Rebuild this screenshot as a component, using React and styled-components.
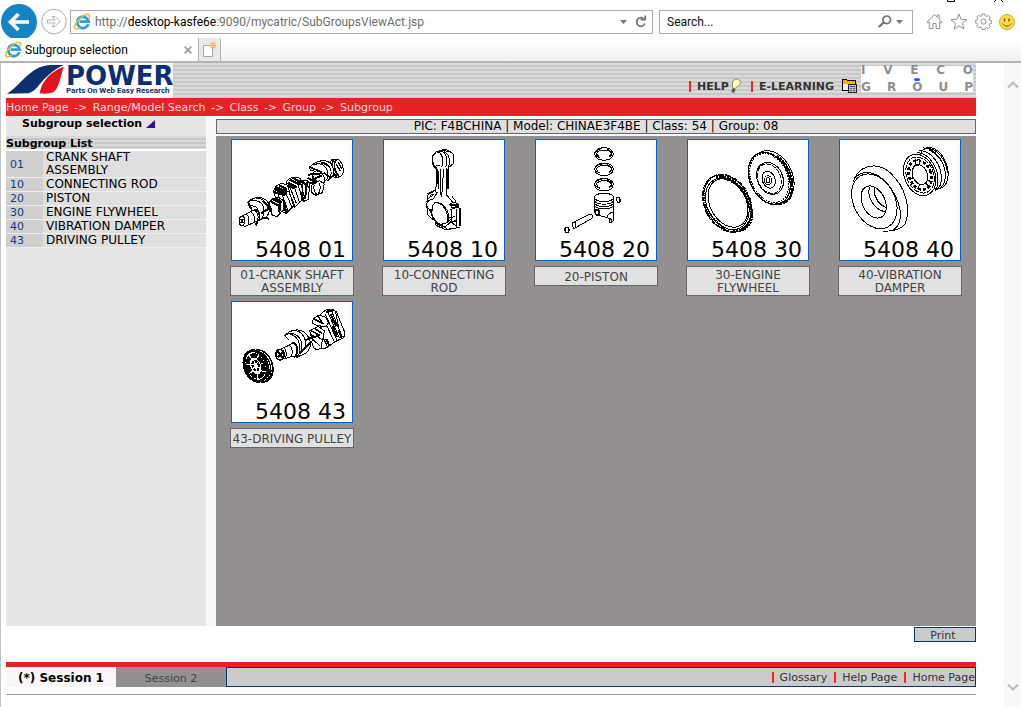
import React from "react";
import styled, { createGlobalStyle, css } from "styled-components";

const GlobalStyle = createGlobalStyle`
  *, *::before, *::after { box-sizing: border-box; }
  body {
    margin: 0;
    background: #fff;
    color: #000;
    font: 11px/13px "DejaVu Sans", Verdana, sans-serif;
  }
  a { color: inherit; text-decoration: none; }
  button, input { font: inherit; color: inherit; }
  svg { display: block; flex: none; }
`;

const hStripes = css`
  background: repeating-linear-gradient(#d9d9d9 0 2px, #c8c8c8 2px 4px);
`;

/* ---------- browser chrome ---------- */

const Window = styled.div`
  display: flex;
  flex-direction: column;
  min-height: 100vh;
`;

const TitleStrip = styled.div`
  display: flex;
  justify-content: flex-end;
  gap: 38px;
  height: 3px;
  padding-right: 17px;
`;

const Toolbar = styled.header`
  display: flex;
  align-items: center;
  height: 35px;
  padding: 2px 6px 0 1px;
  font: 12px/16px Roboto, "Segoe UI", sans-serif;
`;

const IconButton = styled.button`
  display: flex;
  padding: 0;
  border: 0;
  background: none;
`;

const Field = styled.label`
  display: flex;
  align-items: center;
  gap: 4px;
  height: 24px;
  border: 1px solid #a9a9a9;
  background: #fff;
`;

const AddressField = styled(Field)`
  flex: 1;
  margin: 0 6px 0 3px;
  padding: 0 5px 0 3px;
`;

const AddressText = styled.div`
  flex: 1;
  color: #6d6d6d;
  white-space: nowrap;
  b { font-weight: 400; color: #000; }
`;

const SearchField = styled(Field)`
  width: 254px;
  padding: 0 9px 0 7px;
`;

const SearchInput = styled.input`
  flex: 1;
  min-width: 0;
  padding: 0;
  border: 0;
  outline: 0;
  background: none;
  &::placeholder { color: #111; opacity: 1; }
`;

const ToolIcons = styled.div`
  display: flex;
  align-items: center;
  gap: 7px;
  margin-left: 13px;
`;

const TabStrip = styled.div`
  position: relative;
  display: flex;
  height: 25px;
  border-bottom: 2px solid #b4b4b4;
  background: linear-gradient(#fff, #f0f0f0);
  font: 12px/16px Roboto, "Segoe UI", sans-serif;
`;

const BrowserTab = styled.div`
  display: flex;
  align-items: center;
  gap: 3px;
  width: 199px;
  padding: 0 6px 0 5px;
  border-right: 1px solid #b4b4b4;
  background: #fff;
  span { flex: 1; }
`;

const NewTab = styled(IconButton)`
  align-items: center;
  justify-content: center;
  width: 22px;
  border: solid #b4b4b4;
  border-width: 0 1px 0 0;
  background: #e9e9e9;
`;

const Viewport = styled.div`
  display: flex;
  flex: 1;
  border-left: 1px solid #c4c4c4;
`;

const ScrollBar = styled.div`
  display: flex;
  flex-direction: column;
  align-items: center;
  justify-content: space-between;
  width: 17px;
  padding: 17px 0 15px;
  background: #f8f8f8;
`;

/* ---------- page ---------- */

const Page = styled.div`
  display: flex;
  flex-direction: column;
  flex: 1;
  padding: 0 28px 12px 5px;
`;

const Banner = styled.div`
  display: flex;
  justify-content: space-between;
  height: 35px;
  ${hStripes}
`;

const PowerLogo = styled.div`
  display: flex;
  width: 167px;
  background: #fff;
`;

const PowerWords = styled.div`
  display: flex;
  flex-direction: column;
  padding-top: 3px;
  color: #0c2f6e;
  white-space: nowrap;
  strong { font: 700 26px/20px "DejaVu Sans", sans-serif; }
  small { font: 700 8px/10px Roboto, Arial, sans-serif; }
`;

const BannerLinks = styled.nav`
  display: flex;
  align-items: flex-end;
  padding-bottom: 4px;
`;

const BannerLink = styled.a`
  display: flex;
  align-items: center;
  gap: ${(p) => p.$iconGap}px;
  height: 16px;
  margin-right: ${(p) => p.$gap}px;
  color: #333;
  font-weight: 700;
`;

const BarLabel = styled.span`
  display: flex;
  align-items: center;
`;

const Bar = styled.i`
  width: 2px;
  height: 11px;
  margin-right: 6px;
  background: #f22;
`;

const GroupLogo = styled.div`
  display: grid;
  grid-template-rows: 9px 8px 9px;
  width: 112px;
  margin: 3px 3px 0 4px;
  background: #fff;
  color: #8f8f8f;
  align-self: flex-start;
`;

const LogoRow = styled.div`
  display: flex;
  justify-content: space-between;
  font: 700 12px/9px "DejaVu Sans", sans-serif;
`;

const LogoDot = styled.i`
  width: 6px;
  height: 3px;
  border-radius: 50%;
  background: #2452ff;
  place-self: center;
`;

const Breadcrumb = styled.nav`
  display: flex;
  height: 18px;
  background: #e62226;
  color: #fbdada;
  line-height: 20px;
`;

const Arrow = styled.span`
  width: 24px;
  text-align: center;
`;

const Body = styled.div`
  display: flex;
  flex: 1;
  gap: 10px;
  background: #f8f8f8;
`;

const Sidebar = styled.aside`
  width: 200px;
  background: repeating-linear-gradient(90deg, #e7e7e7 0 2px, #e3e3e3 2px 3px);
`;

const SideTitle = styled.h1`
  display: flex;
  align-items: center;
  gap: 4px;
  height: 20px;
  margin: 0;
  padding: 0 0 5px 16px;
  font-size: 11px;
`;

const SideHeading = styled.h2`
  height: 15px;
  margin: 0;
  border-bottom: 2px solid #fff;
  font-size: 11px;
  line-height: 15px;
  ${hStripes}
`;

const GroupTable = styled.table`
  width: 100%;
  border-collapse: collapse;
  font-size: 12px;
  td {
    height: 14px;
    padding: 0 24px 0 3px;
    border-bottom: 1px solid #ededed;
    background: #dfdfdf;
  }
  td:first-child {
    width: 37px;
    padding: 0 0 0 4px;
    background: #cfcfcf;
    color: #0f3e7c;
    font-size: 11px;
  }
`;

const Main = styled.main`
  display: flex;
  flex-direction: column;
  flex: 1;
  padding-top: 3px;
`;

const InfoBar = styled.div`
  height: 15px;
  margin-bottom: 2px;
  border: 1px solid #666;
  background: #e0e0e0;
  font-size: 12px;
  text-align: center;
`;

const Gallery = styled.div`
  display: grid;
  grid-template-columns: repeat(auto-fill, 152px);
  align-content: start;
  row-gap: 5px;
  flex: 1;
  padding-top: 3px;
  background: #929091;
`;

const Card = styled.a`
  display: flex;
  flex-direction: column;
  align-items: center;
  gap: 5px;
`;

const Thumb = styled.div`
  border: 1px solid #0a62cc;
  background: #fff;
`;

const Caption = styled.div`
  display: flex;
  align-items: center;
  justify-content: center;
  width: 124px;
  min-height: 20px;
  padding: 2px 0 0;
  border: 1px solid #666;
  background: #e1e1e1;
  color: #444;
  font-size: 12px;
  text-align: center;
`;

const PrintRow = styled.div`
  display: flex;
  justify-content: flex-end;
  padding: 1px 0 20px;
`;

const PrintButton = styled.button`
  width: 62px;
  height: 15px;
  padding: 1px 4px 0 0;
  border: 1px solid #0b3566;
  background: #cbcbcb;
  color: #333;
`;

const Footer = styled.footer`
  display: flex;
  height: 25px;
  border-top: 5px solid #e62226;
`;

const SessionTab = styled.button`
  width: 110px;
  padding: 2px 0 0;
  border: 0;
  background: ${(p) => (p.$active ? "#f8f8f8" : "#929091")};
  color: ${(p) => (p.$active ? "#000" : "#444")};
  font-size: ${(p) => (p.$active ? 12 : 11)}px;
  font-weight: ${(p) => (p.$active ? 700 : 400)};
`;

const FooterNav = styled.nav`
  display: flex;
  align-items: center;
  justify-content: flex-end;
  gap: 7px;
  flex: 1;
  padding-top: 1px;
  border: 1px solid #0b3566;
  background: #cbcbcb;
  color: #333;
  a { display: flex; align-items: center; }
`;

const Rule = styled.hr`
  width: 100%;
  margin: 7px 0 0;
  border: 0;
  border-top: 1px solid #a0a0a0;
`;

/* ---------- icons ---------- */

const IeIcon = () => (
  <svg width="17" height="17" viewBox="0 0 17 17" fill="none">
    <path d="M14.4 11.2A5.7 5.7 0 1 1 14.6 8.7H5.6" stroke="#2b9fe0" strokeWidth="2.8" />
    <path d="M1.2 15.6C-.6 12.400 3.800 6.600 8.300 3.500S16 .6 15.400 3.800c-.1.900-.5 1.600-.9 2.300" stroke="#f3b82c" strokeWidth="1.500" />
    <path d="M1.200 15.600c1.200 1 3.600-.1 5.200-1.200" stroke="#f3b82c" strokeWidth="1.400" />
  </svg>
);

const BackIcon = () => (
  <svg width="36" height="35" viewBox="0 0 36 35">
    <circle cx="18" cy="18" r="18" fill="#1683c5" />
    <path d="M28 18H10M17.500 10l-8 8 8 8" fill="none" stroke="#fff" strokeWidth="3.600" />
  </svg>
);

const ForwardIcon = () => (
  <svg width="30" height="30" viewBox="0 0 30 30" fill="none" stroke="#adadad">
    <circle cx="17" cy="14.500" r="12.300" />
    <path d="M10.500 13h7.500l-3-3.500h3l5 5-5 5h-3l3-3.500h-7.500z" />
  </svg>
);

const Caret = () => (
  <svg width="7" height="4" viewBox="0 0 7 4"><path d="M0 0h7L3.500 4z" fill="#777" /></svg>
);

const ReloadIcon = () => (
  <svg width="12" height="14" viewBox="0 0 12 14" fill="none" stroke="#6f6f6f" strokeWidth="1.700">
    <path d="M8.500 3.500A4.300 4.300 0 1 0 10 8.500" />
    <path d="M5.500 4.600h4.700V.5" />
  </svg>
);

const SearchIcon = () => (
  <svg width="14" height="13" viewBox="0 0 14 13" fill="none" stroke="#6f6f6f">
    <circle cx="8.700" cy="4.800" r="3.800" strokeWidth="1.700" />
    <path d="M5.800 7.500.800 12" strokeWidth="2.200" />
  </svg>
);

const HomeIcon = () => (
  <svg width="17" height="17" viewBox="0 0 17 17" fill="none" stroke="#929292">
    <path d="M1 9.200 8.500 1.500l2.700 2.800V2h2v4.300L16 9.200l-1 1-1.300-1.300v6.600h-3.600V10.500H7v5H3.300V8.900L2 10.200z" />
  </svg>
);

const StarIcon = () => (
  <svg width="18" height="17" viewBox="0 0 18 17" fill="none" stroke="#929292">
    <path d="m9 1 2.100 5.400 5.900.3-4.600 3.700 1.500 5.600L9 12.900 4.100 16l1.500-5.600L1 6.700l5.900-.3z" />
  </svg>
);

const GearIcon = () => (
  <svg width="17" height="17" viewBox="0 0 17 17" fill="none" stroke="#929292">
    <circle cx="8.500" cy="8.500" r="2.600" />
    <path d="M7 1h3l.3 2 1.300.6 1.700-1.200 2 2-1.100 1.700.5 1.300 2 .3v2.600l-2 .4-.6 1.300 1.200 1.700-2 2-1.700-1.200-1.300.6L10 16.500H7l-.4-2-1.300-.6-1.700 1.200-2-2L2.800 11.400l-.6-1.200-1.900-.4V7.500l2-.4.500-1.300L1.700 4.200l2-2 1.700 1.200L6.700 3z" />
  </svg>
);

const SmileIcon = () => (
  <svg width="16" height="16" viewBox="0 0 16 16">
    <circle cx="8" cy="8" r="7.500" fill="#ffdc3e" stroke="#cfa92c" />
    <path d="M5.500 4.500v3M10 4.500v3" stroke="#735c12" strokeWidth="1.500" />
    <path d="M3.800 9.500c1.500 3.500 6.900 3.500 8.400 0" fill="none" stroke="#735c12" />
  </svg>
);

const CloseIcon = () => (
  <svg width="8" height="8" viewBox="0 0 8 8"><path d="m.7.700 6.600 6.600m0-6.600L.7 7.300" stroke="#a0a0a0" strokeWidth="1.800" /></svg>
);

const NewTabIcon = () => (
  <svg width="15" height="16" viewBox="0 0 15 16">
    <path d="M1.500 3.500h9v11h-9z" fill="#fff" stroke="#a9a9a9" />
    <path d="M11 0v7M7.500 3.500h7M8.500 1l5 5m0-5-5 5" stroke="#e9a227" />
    <circle cx="11" cy="3.500" r="1.600" fill="#f7c95c" />
  </svg>
);

const Chevron = ({ down }) => (
  <svg width="12" height="9" viewBox="0 0 12 9">
    <path d={down ? "M1 1.500l5 5 5-5" : "M1 7.500l5-5 5 5"} fill="none" stroke="#bcbcbc" strokeWidth="2.200" />
  </svg>
);

const PowerMark = () => (
  <svg width="60" height="35" viewBox="0 0 180 105">
    <path d="M3 92C44 68 72 9 132 6h42C142 18 114 48 101 64 90 78 82 86 68 91z" fill="#0c2f6e" />
    <path d="M173 11c-10 30-12 55-26 72-9 10-32 10-46 8 5-35 32-65 72-80z" fill="#e2121f" />
  </svg>
);

const BulbIcon = () => (
  <svg width="12" height="16" viewBox="0 0 12 16">
    <path d="M2.500 7.500 2.500 5C3 1.500 6 .5 8.500 1.500c2.500 1.200 2.500 4.500.3 6L6.500 9 5.500 11l-3-1z" fill="#fffab0" stroke="#8b8b62" />
    <path d="m2.500 10 3 1.500L4 15l-2.500-1z" fill="#555" />
    <path d="M4.500 6 6.500 3" stroke="#fff" strokeWidth="2" />
  </svg>
);

const FolderIcon = () => (
  <svg width="15" height="14" viewBox="0 0 15 14" shapeRendering="crispEdges">
    <path d="M.5.500h4l1 1h8v10H.5z" fill="#f3efdc" stroke="#000" />
    <path d="M1 1h3l1 1h8v3H1z" fill="#f2b21b" />
    <path d="M6.500 5.500h8v8h-8z" fill="#b5bccb" stroke="#222" />
    <path d="M8 7.500h5M8 9.500h2m1 0h2M8 11.500h2m1 0h2" stroke="#4c5a78" />
  </svg>
);

const TitleMark = () => (
  <svg width="9" height="8" viewBox="0 0 9 8"><path d="M9 0v8H0z" fill="#33109b" /></svg>
);

/* ---------- part drawings ---------- */

const CrankShaft = () => (
  <>
    <ellipse cx="341" cy="107" rx="13" ry="25" transform="rotate(-15 341 107)" />
    <path d="M340 82 322 82C308 92 318 128 330 138l18-5" />
    <path d="M334 84c-12 8-4 40 8 48M327 84c-12 10-4 42 8 50" strokeWidth="5" />
    <path d="M318 92c-4 12 0 28 8 40M334 96l12 22M340 90l10 20" strokeWidth="4" />
    <path d="M254 105c18-18 38-22 50-18 18 6 26 26 20 44l-14 14-16-4-8-20-30-6z" />
    <path d="M268 98c20-8 36 4 40 22s-2 24-8 26M282 90c22-2 34 14 36 28s-4 22-8 26" />
    <path d="M256 106l34 14M290 92l22 10M296 122l18 14" strokeWidth="5" />
    <ellipse cx="280" cy="140" rx="18" ry="24" transform="rotate(-25 280 140)" />
    <path d="M250 128 290 124M248 138l34 16M254 146l38-16M256 152l40 2M262 134l26 30" strokeWidth="6" />
    <path d="M260 160c-6 16 2 28 14 30l18-8 6-26-14-10z" />
    <path d="M268 158c-4 12 2 24 8 30M282 152c6 12 4 24-2 34" />
    <path d="M228 150c10-10 24-6 26 8l-4 44-14 6z" />
    <path d="M246 150l-6 52M230 146l22 20" strokeWidth="6" />
    <path d="M184 158c-2-18 24-30 42-18l6 16-2 50-22 20-10-20z" />
    <path d="M188 152l28 14M194 143l30 14M202 136l26 16M188 160l20 8" strokeWidth="7" />
    <path d="M194 164l20 50M206 160l18 52M218 156l16 50M226 150l14 52M184 158l-4 12 30 50" />
    <path d="M146 178c4-22 26-28 42-18l6 22 12 40-22 22-22-8z" />
    <path d="M147 180l34 10M154 166l34 14M150 172l36 14M162 160l24 12" strokeWidth="7" />
    <path d="M158 184l18 54M170 184l20 54M182 182l20 46M190 176l20 46" />
    <path d="M132 208l28-12 16 10-2 28-18 20-16-6z" />
    <path d="M134 206l28 16M140 200l28 14M166 204l-4 44M176 210l8 34M150 196l20 16" strokeWidth="7" />
    <path d="M138 228l4 22 14 4 10-10" />
    <path d="M68 212c10-14 34-20 48-12 22 10 22 40 8 54l-22 12-20-24-6-20z" />
    <path d="M72 208c20-8 42 2 44 22s-2 28-12 34M92 198c22 0 34 14 36 30M78 222c14-2 28 10 26 38" />
    <path d="M108 244l30-18M100 262l-8 18M110 256l22 4M70 214l8 16M114 206l18 20" strokeWidth="6" />
    <path d="M48 254l28-14 14-8c12 4 16 22 10 34l-14 6-28 12z" />
    <path d="M64 247c8 4 10 22 4 34M78 240c10 6 14 22 8 32M88 234c12 6 14 24 8 34" />
    <ellipse cx="51" cy="267" rx="8" ry="14" />
    <path d="M46 260l10 14m-10 0l10-14" strokeWidth="5" />
  </>
);

const ConnectingRod = () => (
  <>
    <path d="M172 85c-2-20 14-30 24-28 14-10 34 0 40 12l1 24-14 12-24 6-10 2c-12-4-18-14-17-28z" />
    <ellipse cx="187" cy="82" rx="15" ry="20" />
    <path d="M182 60c22-4 28 36 14 49M196 56c22 4 24 42 14 52M206 58c16 6 22 30 14 48M190 60c14-8 26-4 40 2M172 92c6 14 16 18 24 18" />
    <path d="M184 108v48c0 26-8 40-29 58l4 32 24 8 40 4 20-10-2-42c-14-14-22-30-20-52v-52" />
    <path d="M197 112v78M213 108l3 82 20 24M190 116v54M206 112l-6 84" />
    <path d="M187 112v44M218 110v60" strokeWidth="5" />
    <path d="M160 184l18-8 8 6-10 18-20 8zM164 190l12-4M158 200l18-12M224 216l12-6 14 6v8l-20 2z" />
    <path d="M226 218l22 2M158 186l14-6" strokeWidth="6" />
    <path d="M155 222l4 28 22 18 2 12 30 14 42-8 1-56-8-4-20 6 2 36-26 22z" />
    <ellipse cx="196" cy="244" rx="22" ry="34" transform="rotate(-28 196 244)" />
    <path d="M168 232c0 24 16 44 36 48" strokeWidth="5" />
    <path d="M178 212c24-4 46 30 38 60M180 270l10 10M208 284l10 8 14-4M230 232v40l14 10v-52M252 228v54M216 272l22-20M155 226l16 10" />
    <path d="M222 272l22-6M186 276l20 8" strokeWidth="5" />
  </>
);

const Ring = ({ y }) => (
  <>
    <ellipse cx="231" cy={y} rx="28" ry="18" />
    <ellipse cx="231" cy={y} rx="22" ry="11" />
    <path d={`M204 ${y + 6}c8 18 46 18 54 0`} />
    <path d={`M206 ${y - 6}c6-8 14-10 20-8M240 ${y - 14}l14 10M208 ${y + 6}l10 6M246 ${y + 10}l8-6`} fill="none" strokeWidth="4" />
  </>
);

const Piston = () => (
  <>
    <Ring y={65} />
    <Ring y={111} />
    <Ring y={157} />
    <path d="M202 196c4-16 54-16 58 0v70l-8 6-6-2v-10l-6-4c-14-2-30-6-38-14z" />
    <path d="M202 198c8 14 50 14 58 0M202 206c8 14 50 14 58 0M202 213c8 14 50 14 58 0M202 220c8 14 50 14 58 0" />
    <path d="M240 256c2-10 8-14 20-16M246 258l6 4v8" />
    <ellipse cx="211" cy="241" rx="6" ry="8" strokeWidth="5" />
    <ellipse cx="274" cy="204" rx="5" ry="8" transform="rotate(-15 274 204)" strokeWidth="4" />
    <path d="M138 272l52-26c6 0 8 8 5 13l-51 29z" />
    <ellipse cx="142" cy="280" rx="5" ry="9" />
    <ellipse cx="120" cy="294" rx="6" ry="8" strokeWidth="4" />
  </>
);

const Flywheel = () => (
  <>
    <ellipse cx="279" cy="135" rx="58" ry="83" transform="rotate(-25 279 135)" />
    <ellipse cx="268" cy="139" rx="58" ry="82" transform="rotate(-25 268 139)" strokeWidth="4" />
    <ellipse cx="268" cy="138" rx="54" ry="77" transform="rotate(-25 268 138)" strokeDasharray="5 3" />
    <path d="M290 72c36 24 56 76 42 120-6 16-22 24-46 24" fill="none" strokeWidth="7" strokeDasharray="9 1" />
    <ellipse cx="270" cy="139" rx="38" ry="50" transform="rotate(-25 270 139)" />
    <ellipse cx="268" cy="140" rx="34" ry="46" transform="rotate(-25 268 140)" strokeDasharray="14 4" />
    <ellipse cx="266" cy="143" rx="19" ry="26" transform="rotate(-20 266 143)" />
    <ellipse cx="264" cy="145" rx="11" ry="14" />
    <ellipse cx="264" cy="145" rx="5" ry="8" />
    <ellipse cx="142" cy="214" rx="67" ry="90" transform="rotate(-28 142 214)" strokeWidth="6" strokeDasharray="6 1" />
    <ellipse cx="142" cy="215" rx="60" ry="82" transform="rotate(-28 142 215)" />
    <ellipse cx="144" cy="213" rx="54" ry="77" transform="rotate(-28 144 213)" />
    <path d="M108 135c60-4 108 60 106 120-2 26-20 42-54 40" fill="none" strokeWidth="10" strokeDasharray="6 2" />
    <path d="M72 168c-6 46 20 94 64 122" fill="none" strokeWidth="5" strokeDasharray="4 3" />
  </>
);

const VibrationDamper = () => (
  <>
    <ellipse cx="150" cy="193" rx="70" ry="96" transform="rotate(-24 150 193)" stroke="none" />
    <path d="M64 150C76 104 130 84 174 122c46 40 66 112 44 156-14 16-40 20-66 20" />
    <path d="M68 138c34-34 82-12 112 36s36 98 4 120" fill="none" />
    <ellipse cx="127" cy="208" rx="62" ry="87" transform="rotate(-28 127 208)" />
    <ellipse cx="125" cy="210" rx="34" ry="51" transform="rotate(-26 125 210)" />
    <path d="M112 166c-8 32 16 68 50 74M128 166c-6 24 10 52 34 60M130 190c6 20 14 30 30 34" />
    <ellipse cx="305" cy="108" rx="40" ry="64" transform="rotate(-20 305 108)" />
    <path d="M272 48c36-2 68 42 68 80 0 24-8 38-20 42M262 56c34-2 66 42 66 80 0 20-6 32-14 38M254 62c34-2 64 42 64 80 0 16-4 28-8 36" fill="none" />
    <path d="M282 48c36 0 62 40 64 74M290 54c26 10 48 40 50 68" fill="none" />
    <ellipse cx="263" cy="129" rx="46" ry="64" transform="rotate(-22 263 129)" />
    <ellipse cx="264" cy="129" rx="40" ry="56" transform="rotate(-22 264 129)" strokeDasharray="16 4" />
    <ellipse cx="264" cy="129" rx="33" ry="45" transform="rotate(-22 264 129)" strokeWidth="8" strokeDasharray="9 6" />
    <ellipse cx="264" cy="128" rx="22" ry="31" transform="rotate(-22 264 128)" />
    <path d="M250 86l12-4v16l-10 2zM226 110l12 6M232 144l12-8M256 172l6-12M288 168l-4-14M298 150l-12-6" strokeWidth="4" />
  </>
);

const DrivingPulley = () => (
  <>
    <path d="M286 58l18-14c12-4 22-2 30 6l26 64-4 14-26 12-24 18-18 4-18-18 6-40z" />
    <path d="M306 46l38 84M318 44l34 82M290 60l38 80M300 56l36 80M276 90l32 66M332 52l10 50" />
    <path d="M304 50l24-4M340 106l10 22M316 56l18 38M304 132l10 22M322 92l14 34M286 92l10 26" strokeWidth="6" />
    <path d="M262 84c0-20 24-28 42-16l6 16-8 12-30-6z" />
    <path d="M266 72l30 14M278 60l14 26" strokeWidth="5" />
    <path d="M254 108l26-14 18 14-6 30-26 10z" />
    <path d="M256 106l30 16M268 100l24 16M258 120l28 12M262 130l24-12" strokeWidth="5" />
    <path d="M262 130c-4 16 2 30 12 34l14-4 4-24-14-12zM262 132l22 20" />
    <path d="M180 122c16-20 46-22 60-8 22 20 20 44 4 60l-28 14-12-28-8-20z" />
    <path d="M184 118c24-8 44 6 46 30s-6 28-14 36M206 106c26 2 40 24 34 54M192 116c24 6 36 26 32 60" />
    <path d="M222 176l34-34M206 186l18-6M240 136l22-10" strokeWidth="6" />
    <path d="M158 166l32-14 16-10c12 4 16 26 8 40l-18 4-28 8z" />
    <path d="M176 158c10 6 10 24 4 34M192 150c12 8 12 26 6 36M202 142c16 8 16 30 8 42" />
    <ellipse cx="165" cy="179" rx="12" ry="16" strokeWidth="5" />
    <path d="M158 170l14 18m-14-2l14-14" strokeWidth="6" />
    <ellipse cx="107" cy="213" rx="35" ry="49" transform="rotate(-18 107 213)" strokeWidth="5" />
    <path d="M84 168c34-4 58 48 44 86M94 170c32 0 52 44 40 80M76 170c34-4 60 52 46 90" fill="none" strokeWidth="4" />
    <ellipse cx="92" cy="213" rx="33" ry="47" transform="rotate(-20 92 213)" strokeWidth="9" />
    <ellipse cx="92" cy="213" rx="22" ry="33" transform="rotate(-20 92 213)" strokeWidth="13" strokeDasharray="22 3" />
    <ellipse cx="92" cy="212" rx="9" ry="14" transform="rotate(-20 92 212)" strokeWidth="7" strokeDasharray="8 3" />
  </>
);

/* Every drawing is laid out on a 360-unit square, three units to a pixel. */
const parts = [
  { code: "01", name: "CRANK SHAFT ASSEMBLY", Art: CrankShaft, box: "21 24 360 360" },
  { code: "10", name: "CONNECTING ROD", Art: ConnectingRod, box: "27 24 360 360" },
  { code: "20", name: "PISTON", Art: Piston, box: "27 24 360 360" },
  { code: "30", name: "ENGINE FLYWHEEL", Art: Flywheel, box: "24 24 360 360" },
  { code: "40", name: "VIBRATION DAMPER", Art: VibrationDamper, box: "24 24 360 360" },
  { code: "43", name: "DRIVING PULLEY", Art: DrivingPulley, box: "21 21 360 360" },
];

const PartCard = ({ code, name, Art, box }) => (
  <Card href={`#${code}`}>
    <Thumb>
      <svg width="120" height="120" viewBox="0 0 120 120" overflow="visible">
        <svg width="120" height="120" viewBox={box} fill="#fff" stroke="#000" strokeWidth="3" shapeRendering="crispEdges">
          <Art />
        </svg>
        <text x="114" y="117" textAnchor="end" fontFamily="DejaVu Sans" fontSize="22">{`5408 ${code}`}</text>
      </svg>
    </Thumb>
    <Caption>{`${code}-${name}`}</Caption>
  </Card>
);

const crumbs = ["Home Page", "Range/Model Search", "Class", "Group", "Subgroup"];

export default function App() {
  return (
    <Window>
      <GlobalStyle />
      <TitleStrip>
        <svg width="8" height="3" viewBox="0 0 8 3"><path d="M.5 0v1.500h7V0" fill="none" stroke="#000" /></svg>
        <svg width="11" height="3" viewBox="0 0 11 3"><path d="M3 0 1 2M8 0l2 2" stroke="#000" /></svg>
      </TitleStrip>
      <Toolbar>
        <IconButton aria-label="Back"><BackIcon /></IconButton>
        <IconButton aria-label="Forward"><ForwardIcon /></IconButton>
        <AddressField as="div">
          <IeIcon />
          <AddressText>http://<b>desktop-kasfe6e</b>:9090/mycatric/SubGroupsViewAct.jsp</AddressText>
          <Caret />
          <span />
          <IconButton aria-label="Refresh"><ReloadIcon /></IconButton>
        </AddressField>
        <SearchField>
          <SearchInput aria-label="Search" placeholder="Search..." />
          <SearchIcon />
          <Caret />
        </SearchField>
        <ToolIcons>
          <IconButton aria-label="Home"><HomeIcon /></IconButton>
          <IconButton aria-label="Favorites"><StarIcon /></IconButton>
          <IconButton aria-label="Tools"><GearIcon /></IconButton>
          <IconButton aria-label="Feedback"><SmileIcon /></IconButton>
        </ToolIcons>
      </Toolbar>
      <TabStrip>
        <BrowserTab>
          <IeIcon />
          <span>Subgroup selection</span>
          <IconButton aria-label="Close tab"><CloseIcon /></IconButton>
        </BrowserTab>
        <NewTab aria-label="New tab"><NewTabIcon /></NewTab>
      </TabStrip>

      <Viewport>
        <Page>
          <Banner>
            <PowerLogo>
              <PowerMark />
              <PowerWords>
                <strong>POWER</strong>
                <small>Parts On Web Easy Research</small>
              </PowerWords>
            </PowerLogo>
            <BannerLinks>
              <BannerLink href="#help" $gap={9} $iconGap={1}>
                <BarLabel><Bar />HELP</BarLabel><BulbIcon />
              </BannerLink>
              <BannerLink href="#elearning" $gap={0} $iconGap={8}>
                <BarLabel><Bar />E-LEARNING</BarLabel><FolderIcon />
              </BannerLink>
              <GroupLogo>
                <LogoRow>{[..."IVECO"].map((c) => <span key={c}>{c}</span>)}</LogoRow>
                <LogoDot />
                <LogoRow>{[..."GROUP"].map((c) => <span key={c}>{c}</span>)}</LogoRow>
              </GroupLogo>
            </BannerLinks>
          </Banner>
          <Breadcrumb>
            {crumbs.map((c, i) => (
              <React.Fragment key={c}>{i > 0 && <Arrow>{"->"}</Arrow>}<a href={`#${c}`}>{c}</a></React.Fragment>
            ))}
          </Breadcrumb>
          <Body>
            <Sidebar>
              <SideTitle>Subgroup selection <TitleMark /></SideTitle>
              <SideHeading>Subgroup List</SideHeading>
              <GroupTable>
                <tbody>
                  {parts.map((p) => (
                    <tr key={p.code}>
                      <td><a href={`#${p.code}`}>{p.code}</a></td>
                      <td>{p.name}</td>
                    </tr>
                  ))}
                </tbody>
              </GroupTable>
            </Sidebar>
            <Main>
              <InfoBar>PIC: F4BCHINA | Model: CHINAE3F4BE | Class: 54 | Group: 08</InfoBar>
              <Gallery>
                {parts.map((p) => <PartCard key={p.code} {...p} />)}
              </Gallery>
            </Main>
          </Body>
          <PrintRow><PrintButton>Print</PrintButton></PrintRow>
          <Footer>
            <SessionTab $active>(*) Session 1</SessionTab>
            <SessionTab>Session 2</SessionTab>
            <FooterNav>
              <a href="#glossary"><Bar />Glossary</a>
              <a href="#help"><Bar />Help Page</a>
              <a href="#home"><Bar />Home Page</a>
            </FooterNav>
          </Footer>
          <Rule />
        </Page>
        <ScrollBar>
          <Chevron />
          <Chevron down />
        </ScrollBar>
      </Viewport>
    </Window>
  );
}
